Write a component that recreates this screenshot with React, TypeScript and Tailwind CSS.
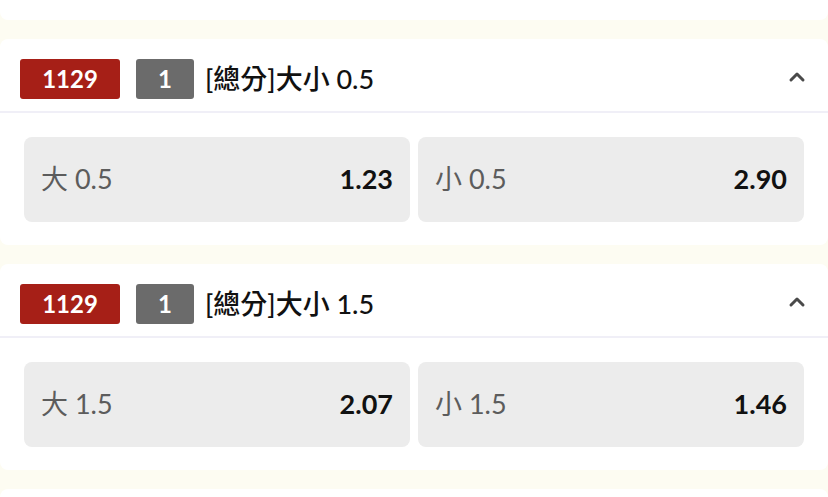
import { ReactNode } from "react";

interface Market {
  id: string;
  period: string;
  title: string;
  options: { label: string; odds: string }[];
}

const markets: Market[] = [
  {
    id: "1129",
    period: "1",
    title: "[總分]大小 0.5",
    options: [
      { label: "大 0.5", odds: "1.23" },
      { label: "小 0.5", odds: "2.90" },
    ],
  },
  {
    id: "1129",
    period: "1",
    title: "[總分]大小 1.5",
    options: [
      { label: "大 1.5", odds: "2.07" },
      { label: "小 1.5", odds: "1.46" },
    ],
  },
];

function ChevronUp() {
  return (
    <svg width="18" height="12" viewBox="0 0 18 12" className="text-[#4a4a4a]">
      <polyline
        points="3,9 9,3 15,9"
        fill="none"
        stroke="currentColor"
        strokeWidth="3"
        strokeLinecap="round"
        strokeLinejoin="round"
      />
    </svg>
  );
}

function Badge({ children, className }: { children: ReactNode; className: string }) {
  return (
    <div
      className={[
        "h-10 rounded-[3px] flex items-center justify-center text-white text-[24px] font-bold shrink-0",
        className,
      ].join(" ")}
    >
      {children}
    </div>
  );
}

function MarketCard({ market }: { market: Market }) {
  return (
    <div className="bg-white rounded-lg shrink-0">
      <div className="h-[72px] pt-[8px] flex items-center pl-[20px] pr-[22px]">
        <Badge className="w-[100px] bg-[#a61f17]">{market.id}</Badge>
        <Badge className="w-[58px] bg-[#6b6b6b] ml-[16px]">{market.period}</Badge>
        <span className="ml-[11px] text-[27px] font-medium text-[#111]">
          {market.title}
        </span>
        <div className="ml-auto -mt-[4px]">
          <ChevronUp />
        </div>
      </div>

      <div className="border-t-2 border-[#f0eff7] px-[24px] pt-[24px] pb-[23px] grid grid-cols-2 gap-[8px]">
        {market.options.map((opt) => (
          <div
            key={opt.label}
            className="h-[85px] rounded-lg bg-[#ececec] flex items-center justify-between px-[17px]"
          >
            <span className="text-[27px] text-[#5c5c5c]">{opt.label}</span>
            <span className="text-[27px] font-bold text-[#111]">{opt.odds}</span>
          </div>
        ))}
      </div>
    </div>
  );
}

export default function App() {
  return (
    <div
      className="w-[828px] h-[497px] overflow-hidden bg-[#fdfcf2] flex flex-col gap-[19px]"
      style={{ fontFamily: "Lato, 'Noto Sans CJK TC', sans-serif" }}
    >
      {/* tail of the card above */}
      <div className="h-[20px] bg-white rounded-b-lg shrink-0" />

      {markets.map((m, i) => (
        <MarketCard key={i} market={m} />
      ))}

      <div className="h-[20px] bg-white rounded-t-lg shrink-0" />
    </div>
  );
}
